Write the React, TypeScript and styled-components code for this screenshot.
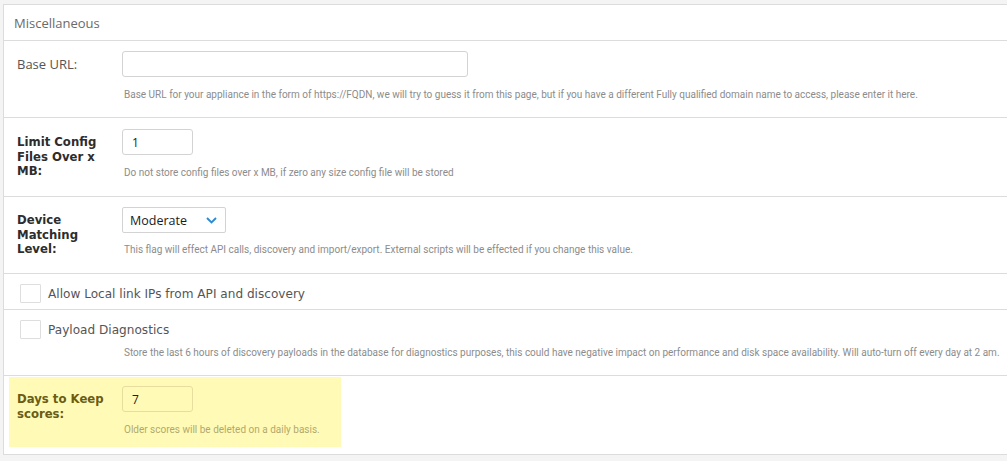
import React from "react";
import styled, { createGlobalStyle } from "styled-components";

const Global = createGlobalStyle`
  html, body { margin: 0; padding: 0; background: #f4f4f4; }
  body { font-family: "Open Sans", "DejaVu Sans", sans-serif; }
  * { box-sizing: border-box; }
`;

const Page = styled.div`
  padding: 4px 0 0 3px;
  height: 461px;
  overflow: hidden;
`;

const Panel = styled.section`
  width: 1010px;
  background: #fff;
  border: 1px solid #dcdcdc;
  border-right: none;
`;

const Header = styled.header`
  height: 36px;
  display: flex;
  align-items: center;
  padding-left: 10px;
  font-family: "Open Sans", sans-serif;
  font-size: 13px;
  color: #6a6a6a;
  border-bottom: 1px solid #dcdcdc;
`;

const Row = styled.div<{ $h: number; $last?: boolean }>`
  height: ${(p) => p.$h}px;
  border-bottom: ${(p) => (p.$last ? "none" : "1px solid #dcdcdc")};
  padding: 0 0 0 5px;
`;

const Highlight = styled.div<{ $h: number }>`
  height: ${(p) => p.$h}px;
  width: 332px;
  margin-top: 1px;
  background: #fffbb7;
  display: grid;
  grid-template-columns: 105px 1fr;
  padding: 9px 0 0 8px;
`;

const FieldGrid = styled.div<{ $pt: number }>`
  display: grid;
  grid-template-columns: 105px 1fr;
  padding: ${(p) => p.$pt}px 0 0 8px;
`;

const Label = styled.label<{ $bold?: boolean; $tone?: "yellow" }>`
  font-family: ${(p) =>
    p.$bold ? '"DejaVu Sans", Verdana, sans-serif' : '"Open Sans", sans-serif'};
  font-weight: ${(p) => (p.$bold ? 700 : 400)};
  font-size: ${(p) => (p.$bold ? "11.7px" : "13px")};
  line-height: 14.6px;
  color: ${(p) => (p.$tone === "yellow" ? "#6b5c16" : p.$bold ? "#2d2d2d" : "#555")};
  padding-top: 6px;
  width: 92px;
`;

const Control = styled.div`
  display: flex;
  flex-direction: column;
  align-items: flex-start;
`;

const TextInput = styled.input<{ $w: number; $tone?: "yellow" }>`
  width: ${(p) => p.$w}px;
  height: 26px;
  border: 1px solid ${(p) => (p.$tone === "yellow" ? "#e6dd9e" : "#d3d3d3")};
  border-radius: 3px;
  background: ${(p) => (p.$tone === "yellow" ? "#fffbb7" : "#fff")};
  padding: 0 9px;
  font-family: "Open Sans", sans-serif;
  font-size: 12px;
  color: #222;
  outline: none;
`;

const SelectBox = styled.div`
  width: 104px;
  height: 26px;
  border: 1px solid #d3d3d3;
  border-radius: 2px;
  display: flex;
  align-items: center;
  justify-content: space-between;
  padding: 0 8px 0 7px;
  font-family: "Open Sans", sans-serif;
  font-size: 12.5px;
  color: #1a1a1a;
`;

const Help = styled.div<{ $tone?: "yellow"; $mt: number }>`
  margin-top: ${(p) => p.$mt}px;
  font-family: Roboto, "Open Sans", sans-serif;
  font-size: 10px;
  color: ${(p) => (p.$tone === "yellow" ? "#b3a86c" : "#8c8c8c")};
  padding-left: 2px;
  white-space: nowrap;
`;

const CheckLine = styled.div`
  display: flex;
  align-items: center;
  gap: 7px;
  padding: 10px 0 0 11px;
`;

const Box = styled.span`
  width: 21px;
  height: 19px;
  border: 1px solid #dedede;
  border-radius: 1px;
  background: #fff;
  display: inline-block;
`;

const CheckText = styled.span`
  font-family: "DejaVu Sans", Verdana, sans-serif;
  font-size: 12.1px;
  color: #555;
`;

const Indented = styled.div`
  padding-left: 113px;
`;

const Chevron = () => (
  <svg width="11" height="7" viewBox="0 0 11 7" fill="none">
    <path d="M1 1l4.5 4.5L10 1" stroke="#2b8bd3" strokeWidth="1.9" />
  </svg>
);

export default function App() {
  return (
    <>
      <Global />
      <Page>
        <Panel>
          <Header>Miscellaneous</Header>
          <Row $h={77}>
            <FieldGrid $pt={10}>
              <Label>Base URL:</Label>
              <Control>
                <TextInput $w={346} defaultValue="" />
                <Help $mt={12}>
                  Base URL for your appliance in the form of https://FQDN, we will try to guess it from this page, but if you have a different Fully qualified domain name to access, please enter it here.
                </Help>
              </Control>
            </FieldGrid>
          </Row>
          <Row $h={79}>
            <FieldGrid $pt={11}>
              <Label $bold>Limit Config Files Over x MB:</Label>
              <Control>
                <TextInput $w={71} defaultValue="1" />
                <Help $mt={12}>
                  Do not store config files over x MB, if zero any size config file will be stored
                </Help>
              </Control>
            </FieldGrid>
          </Row>
          <Row $h={77}>
            <FieldGrid $pt={10}>
              <Label $bold>Device Matching Level:</Label>
              <Control>
                <SelectBox>
                  <span>Moderate</span>
                  <Chevron />
                </SelectBox>
                <Help $mt={11}>
                  This flag will effect API calls, discovery and import/export. External scripts will be effected if you change this value.
                </Help>
              </Control>
            </FieldGrid>
          </Row>
          <Row $h={36}>
            <CheckLine>
              <Box />
              <CheckText>Allow Local link IPs from API and discovery</CheckText>
            </CheckLine>
          </Row>
          <Row $h={66}>
            <CheckLine>
              <Box />
              <CheckText>Payload Diagnostics</CheckText>
            </CheckLine>
            <Indented>
              <Help $mt={8}>
                Store the last 6 hours of discovery payloads in the database for diagnostics purposes, this could have negative impact on performance and disk space availability. Will auto-turn off every day at 2 am.
              </Help>
            </Indented>
          </Row>
          <Row $h={77} $last>
            <Highlight $h={70}>
              <Label $bold $tone="yellow">Days to Keep scores:</Label>
              <Control>
                <TextInput $w={71} $tone="yellow" defaultValue="7" />
                <Help $mt={12} $tone="yellow">
                  Older scores will be deleted on a daily basis.
                </Help>
              </Control>
            </Highlight>
          </Row>
        </Panel>
      </Page>
    </>
  );
}
